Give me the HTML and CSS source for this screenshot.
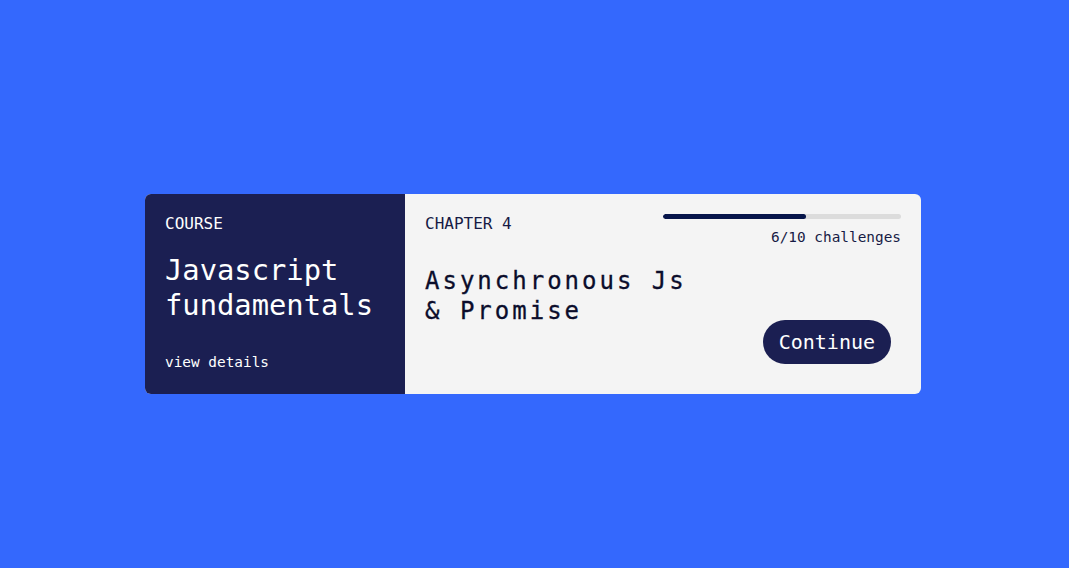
FILE: index.html
```html
<!DOCTYPE html>
<html lang="en">
<head>
<meta charset="utf-8">
<title>Course card</title>
<link rel="stylesheet" href="styles.css">
</head>
<body>
<main class="page">
  <article class="card">
    <section class="course">
      <div class="label">COURSE</div>
      <h2 class="course-title">Javascript fundamentals</h2>
      <a class="details" href="#">view details</a>
    </section>
    <section class="chapter">
      <div class="chapter-head">
        <div class="label dark">CHAPTER 4</div>
        <div class="progress">
          <div class="track"><div class="fill" style="width:60%"></div></div>
          <div class="count">6/10 challenges</div>
        </div>
      </div>
      <div class="chapter-body">
        <h3 class="chapter-title">Asynchronous Js &amp; Promise</h3>
        <button class="continue">Continue</button>
      </div>
    </section>
  </article>
</main>
</body>
</html>
```

FILE: styles.css
```css
* { box-sizing: border-box; }
html, body { margin: 0; padding: 0; }
body {
  background: #3468fd;
  width: 1069px;
  height: 568px;
  overflow: hidden;
  font-family: "DejaVu Sans Mono", "Liberation Mono", monospace;
}
.page {
  padding: 194px 0 0 145px;
}
.card {
  display: flex;
  width: 776px;
  height: 200px;
  border-radius: 6px;
  overflow: hidden;
  background: #f4f4f4;
}
.course {
  width: 260px;
  flex: none;
  background: #1b1f52;
  color: #ffffff;
  display: flex;
  flex-direction: column;
  padding: 20px 20px 23px;
}
.label {
  font-size: 16px;
  line-height: 19.2px;
}
.label.dark { color: #171b45; }
.course-title {
  margin: 20px 0 0;
  font-weight: normal;
  font-size: 28.8px;
  line-height: 34.5px;
  letter-spacing: 0;
}
.details {
  margin-top: auto;
  color: #ffffff;
  text-decoration: none;
  font-size: 14.4px;
  line-height: 17.3px;
}
.chapter {
  flex: 1;
  display: flex;
  flex-direction: column;
  padding: 20px;
  color: #0b0d2b;
}
.chapter-head {
  display: flex;
  justify-content: space-between;
  align-items: flex-start;
}
.progress {
  width: 238px;
  display: flex;
  flex-direction: column;
  align-items: flex-end;
}
.track {
  width: 100%;
  height: 5px;
  border-radius: 3px;
  background: #dcdcdc;
  overflow: hidden;
}
.fill {
  height: 100%;
  background: #07154a;
  border-radius: 3px;
}
.count {
  margin-top: 10px;
  font-size: 14.4px;
  line-height: 17.3px;
  color: #171b45;
}
.chapter-body {
  flex: 1;
  display: flex;
  justify-content: space-between;
  align-items: flex-end;
  margin-top: 21px;
}
.chapter-title {
  align-self: flex-start;
  margin: 0;
  max-width: 280px;
  font-size: 24px;
  line-height: 29.5px;
  font-weight: normal;
  letter-spacing: 3px;
  -webkit-text-stroke: 0.3px #0b0d2b;
}
.continue {
  margin: 0 10px 10px 0;
  height: 44px;
  padding: 0 16px;
  border: none;
  border-radius: 22px;
  background: #1b1f52;
  color: #ffffff;
  font-family: "DejaVu Sans Mono", "Liberation Mono", monospace;
  font-size: 20px;
  line-height: 24px;
}
```
